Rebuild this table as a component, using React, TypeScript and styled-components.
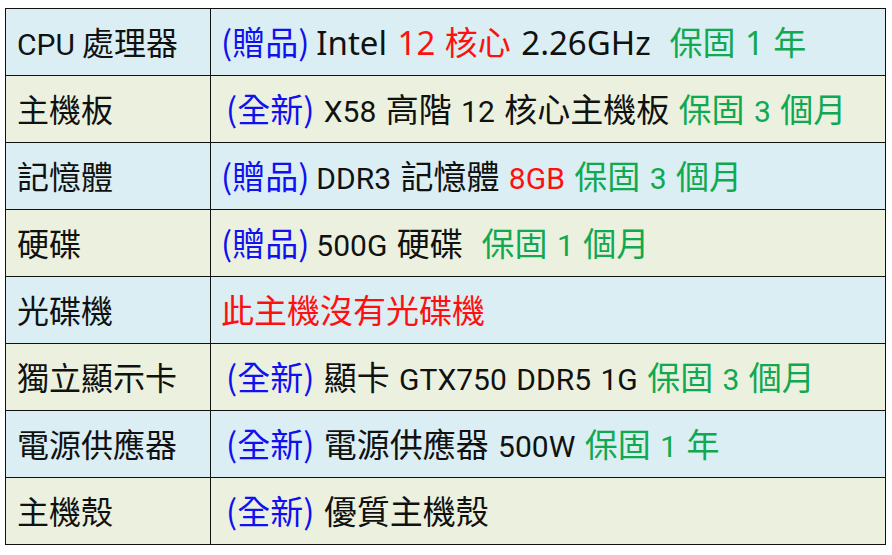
import React, { FunctionComponent } from 'react';
import styled, { createGlobalStyle } from 'styled-components';

const GlobalStyle = createGlobalStyle`
  html, body {
    margin: 0;
    padding: 0;
    background: #ffffff;
  }
  body {
    padding: 8px 0 0 5px;
    font-family: "Noto Sans CJK TC", "Noto Sans", sans-serif;
  }
`;

const borderColor = '#111111';

const Table = styled.table`
  width: 881px;
  height: 536px;
  border-collapse: collapse;
  table-layout: fixed;
  border: 1.5px solid ${borderColor};
`;

const Row = styled.tr<{ $alt: boolean }>`
  height: 67px;
  background: ${(p) => (p.$alt ? '#ebf1de' : '#daeef3')};
`;

const LabelCell = styled.td`
  width: 193px;
  padding: 0 0 2px 11px;
  border: 1px solid ${borderColor};
  font-size: 32px;
  color: #111;
  white-space: nowrap;
  vertical-align: middle;
`;

const ValueCell = styled.td`
  padding: 0 0 2px 10px;
  border: 1px solid ${borderColor};
  font-size: 33px;
  word-spacing: 2px;
  color: #111;
  white-space: nowrap;
  vertical-align: middle;
`;

const Blue = styled.span<{ $indent?: boolean; $gap?: boolean }>`
  color: #1010f0;
  margin-left: ${(p) => (p.$indent ? '5px' : '0')};
  margin-right: ${(p) => (p.$gap ? '7px' : '0')};
`;

const Red = styled.span`
  color: #ff1010;
`;

const Green = styled.span`
  color: #10a850;
`;

const Wide = styled.span`
  font-family: "Noto Sans", "Open Sans", sans-serif;
  font-size: 33px;
`;

const Narrow = styled.span`
  font-family: "Roboto", "Liberation Sans", sans-serif;
  font-size: 30px;
`;

interface Item {
  label: React.ReactNode;
  value: React.ReactNode;
}

const items: Array<Item> = [
  {
    label: (
      <>
        <Narrow>CPU</Narrow> 處理器
      </>
    ),
    value: (
      <>
        <Blue $gap>(贈品)</Blue>
        <Wide>Intel </Wide>
        <Red>
          <Wide>12</Wide> 核心
        </Red>
        <Wide> 2.26GHz</Wide>
        {'\u00a0 '}
        <Green>
          保固 <Wide>1</Wide> 年
        </Green>
      </>
    ),
  },
  {
    label: '主機板',
    value: (
      <>
        <Blue $indent>(全新)</Blue> <Narrow>X58</Narrow> 高階 <Narrow>12</Narrow> 核心主機板{' '}
        <Green>
          保固 <Narrow>3</Narrow> 個月
        </Green>
      </>
    ),
  },
  {
    label: '記憶體',
    value: (
      <>
        <Blue $gap>(贈品)</Blue>
        <Narrow>DDR3</Narrow> 記憶體{' '}
        <Red>
          <Narrow>8GB</Narrow>
        </Red>{' '}
        <Green>
          保固 <Narrow>3</Narrow> 個月
        </Green>
      </>
    ),
  },
  {
    label: '硬碟',
    value: (
      <>
        <Blue $gap>(贈品)</Blue>
        <Narrow>500G</Narrow> 硬碟{'\u00a0 '}
        <Green>
          保固 <Narrow>1</Narrow> 個月
        </Green>
      </>
    ),
  },
  {
    label: '光碟機',
    value: <Red>此主機沒有光碟機</Red>,
  },
  {
    label: '獨立顯示卡',
    value: (
      <>
        <Blue $indent>(全新)</Blue> 顯卡 <Narrow>GTX750 DDR5 1G</Narrow>{' '}
        <Green>
          保固 <Narrow>3</Narrow> 個月
        </Green>
      </>
    ),
  },
  {
    label: '電源供應器',
    value: (
      <>
        <Blue $indent>(全新)</Blue> 電源供應器 <Narrow>500W</Narrow>{' '}
        <Green>
          保固 <Narrow>1</Narrow> 年
        </Green>
      </>
    ),
  },
  {
    label: '主機殼',
    value: (
      <>
        <Blue $indent>(全新)</Blue> 優質主機殼
      </>
    ),
  },
];

const App: FunctionComponent = () => {
  return (
    <>
      <GlobalStyle />
      <Table>
        <tbody>
          {items.map((item: Item, index: number) => {
            return (
              <Row key={index} $alt={index % 2 === 1}>
                <LabelCell>{item.label}</LabelCell>
                <ValueCell>{item.value}</ValueCell>
              </Row>
            );
          })}
        </tbody>
      </Table>
    </>
  );
};

export default App;
